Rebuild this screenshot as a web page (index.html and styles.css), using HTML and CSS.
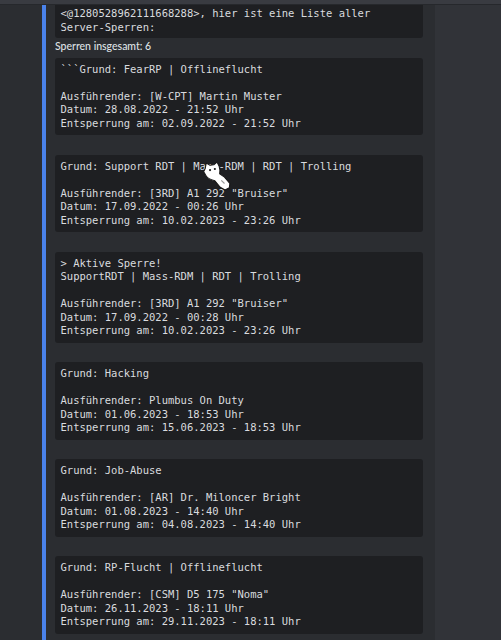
FILE: index.html
```
<!DOCTYPE html>
<html lang="de">
<head>
<meta charset="utf-8">
<title>Server-Sperren</title>
<link rel="stylesheet" href="styles.css">
</head>
<body>
<div class="topbar"></div>
<div class="message">
  <div class="gutter"></div>
  <div class="embed">
    <pre class="code code-first">&lt;@1280528962111668288&gt;, hier ist eine Liste aller Server-Sperren:</pre>
    <div class="field-name">Sperren insgesamt: 6</div>
    <pre class="code">&#96;&#96;&#96;Grund: FearRP | Offlineflucht

Ausführender: [W-CPT] Martin Muster
Datum: 28.08.2022 - 21:52 Uhr
Entsperrung am: 02.09.2022 - 21:52 Uhr</pre>
    <pre class="code">Grund: Support RDT | Mass-RDM | RDT | Trolling

Ausführender: [3RD] A1 292 "Bruiser"
Datum: 17.09.2022 - 00:26 Uhr
Entsperrung am: 10.02.2023 - 23:26 Uhr</pre>
    <pre class="code">&gt; Aktive Sperre!
SupportRDT | Mass-RDM | RDT | Trolling

Ausführender: [3RD] A1 292 "Bruiser"
Datum: 17.09.2022 - 00:28 Uhr
Entsperrung am: 10.02.2023 - 23:26 Uhr</pre>
    <pre class="code">Grund: Hacking

Ausführender: Plumbus On Duty
Datum: 01.06.2023 - 18:53 Uhr
Entsperrung am: 15.06.2023 - 18:53 Uhr</pre>
    <pre class="code">Grund: Job-Abuse

Ausführender: [AR] Dr. Miloncer Bright
Datum: 01.08.2023 - 14:40 Uhr
Entsperrung am: 04.08.2023 - 14:40 Uhr</pre>
    <pre class="code">Grund: RP-Flucht | Offlineflucht

Ausführender: [CSM] D5 175 "Noma"
Datum: 26.11.2023 - 18:11 Uhr
Entsperrung am: 29.11.2023 - 18:11 Uhr</pre>
  </div>
  <div class="aside"></div>
</div>
<!-- custom cat-shaped mouse pointer hovering over the list -->
<svg class="cursor" width="30" height="30" viewBox="0 0 28 28" aria-hidden="true">
  <path d="M3 7 L4 2 L7.5 4 L11 3.5 L14 1 L16 5 C17 8 17 10 16.5 12 L21 15 L26 21 L25.5 25 L21.5 27 L17 24.5 L12 18.5 C8 17.5 4.5 16 3 12.5 L1.5 10 Z" fill="#ffffff" stroke="#161616" stroke-width="1" stroke-linejoin="round"/>
  <circle cx="7.5" cy="8.5" r="1" fill="#161616"/>
  <circle cx="12" cy="7.5" r="1" fill="#161616"/>
  <path d="M18 18 L21 21" stroke="#9a9a9a" stroke-width="1"/>
</svg>
</body>
</html>
```

FILE: styles.css
```
html, body {
  margin: 0;
  padding: 0;
}

body {
  width: 501px;
  height: 640px;
  overflow: hidden;
  background: #313338;
  position: relative;
}

.topbar {
  height: 4px;
  background: #393b41;
  border-bottom: 1px solid #26282c;
}

.message {
  display: flex;
  align-items: stretch;
  height: 635px;
}

.gutter {
  width: 42px;
  flex: none;
  background: #2b2d31;
}

.embed {
  width: 368px;
  flex: none;
  background: #2b2d31;
  border-left: 4px solid #4a82ea;
  padding: 0 12px 0 9px;
  display: flex;
  flex-direction: column;
}

.aside {
  flex: 1;
  background: #313338;
}

.code {
  margin: 19.5px 0 0;
  padding: 5px 5.5px;
  background: #1e1f22;
  border-radius: 3px;
  font-family: "DejaVu Sans Mono", "Liberation Mono", monospace;
  font-size: 10.5px;
  line-height: 13.5px;
  color: #d9dbdf;
  white-space: pre-wrap;
  word-break: break-word;
}

.code-first {
  margin-top: 0;
  padding-top: 2px;
  padding-bottom: 4px;
  border-radius: 0 0 3px 3px;
}

.field-name {
  margin: 2px 0 0;
  font-family: "Lato", "Noto Sans", sans-serif;
  font-size: 10.5px;
  line-height: 13.5px;
  font-weight: 500;
  color: #dfe1e5;
}

.field-name + .code {
  margin-top: 4px;
}

.cursor {
  position: absolute;
  left: 202px;
  top: 161px;
}
```
